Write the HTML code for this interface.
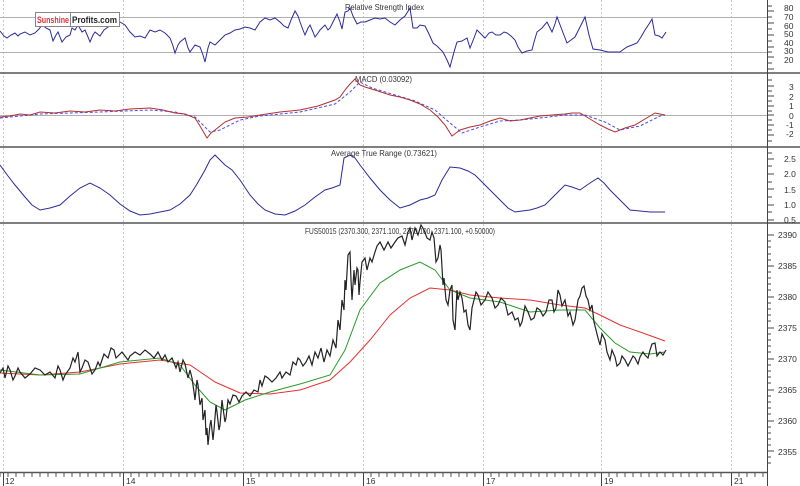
<!DOCTYPE html>
<html><head><meta charset="utf-8"><style>
html,body{margin:0;padding:0;background:#fff;}
svg{display:block;font-family:"Liberation Sans",sans-serif;}
</style></head><body>
<svg width="800" height="486" viewBox="0 0 800 486" xmlns="http://www.w3.org/2000/svg">
<rect width="800" height="486" fill="#fff"/>
<g stroke="#c8c8c8" stroke-dasharray="2,2" stroke-width="1">
<line x1="123.5" y1="0" x2="123.5" y2="472"/><line x1="243.5" y1="0" x2="243.5" y2="472"/>
<line x1="363.5" y1="0" x2="363.5" y2="472"/><line x1="483.5" y1="0" x2="483.5" y2="472"/>
<line x1="601.5" y1="0" x2="601.5" y2="472"/><line x1="731.5" y1="0" x2="731.5" y2="472"/>
<line x1="3.5" y1="0" x2="3.5" y2="472"/>
</g>
<g stroke="#b0b0b0" stroke-width="1">
<line x1="0" y1="17.5" x2="767" y2="17.5"/><line x1="0" y1="52.5" x2="767" y2="52.5"/>
<line x1="0" y1="115.5" x2="767" y2="115.5"/>
</g>
<g stroke="#555" stroke-width="1.5">
<line x1="0" y1="73" x2="800" y2="73"/><line x1="0" y1="147" x2="800" y2="147"/>
<line x1="0" y1="223" x2="800" y2="223"/><line x1="0" y1="472.5" x2="768" y2="472.5"/>
</g>
<line x1="767.5" y1="0" x2="767.5" y2="486" stroke="#444"/>
<g stroke="#444" stroke-width="1">
<path d="M768 6h4M768 11h6M768 17h4M768 23h6M768 29h4M768 35h6M768 41h4M768 47h6M768 52h4M768 57h6M768 63h4M768 69h6"/>
<path d="M768 80h4M768 86h6M768 91h4M768 96h6M768 101h4M768 106h6M768 111h4M768 115h6M768 120h4M768 125h6M768 130h4M768 135h6M768 141h4"/>
<path d="M768 153h4M768 159h6M768 166h4M768 174h6M768 182h4M768 189h6M768 197h4M768 205h6M768 212h4M768 220h6"/>
<path d="M768 235h6M768 241h3M768 247h3M768 254h3M768 260h3M768 266h6M768 272h3M768 278h3M768 284h3M768 290h3M768 297h6M768 303h3M768 309h3M768 315h3M768 321h3M768 328h6M768 334h3M768 340h3M768 346h3M768 352h3M768 359h6M768 365h3M768 371h3M768 377h3M768 383h3M768 390h6M768 396h3M768 402h3M768 408h3M768 414h3M768 421h6M768 427h3M768 433h3M768 439h3M768 445h3M768 451h6M768 457h3M768 463h3"/>
</g>
<g font-size="8.5" fill="#333">
<text x="784" y="11">80</text><text x="784" y="20">70</text><text x="784" y="29">60</text><text x="784" y="37">50</text><text x="784" y="46">40</text><text x="784" y="54">30</text><text x="784" y="63">20</text>
<text x="789" y="90">3</text><text x="789" y="100">2</text><text x="789" y="109">1</text><text x="789" y="119">0</text><text x="786" y="128">-1</text><text x="786" y="137">-2</text>
<text x="784" y="162">2.5</text><text x="784" y="177">2.0</text><text x="784" y="193">1.5</text><text x="784" y="208">1.0</text><text x="784" y="223">0.5</text>
<text x="778" y="238">2390</text><text x="778" y="269">2385</text><text x="778" y="300">2380</text><text x="778" y="331">2375</text><text x="778" y="362">2370</text><text x="778" y="393">2365</text><text x="778" y="424">2360</text><text x="778" y="455">2355</text>
</g>
<path d="M0 473v4M8 473v4M16 473v4M24 473v4M32 473v4M40 473v4M48 473v4M56 473v4M64 473v4M72 473v4M80 473v4M88 473v4M96 473v4M104 473v4M112 473v4M120 473v4M131 473v4M139 473v4M147 473v4M155 473v4M163 473v4M171 473v4M179 473v4M187 473v4M195 473v4M203 473v4M211 473v4M219 473v4M227 473v4M235 473v4M251 473v4M259 473v4M267 473v4M275 473v4M283 473v4M291 473v4M299 473v4M307 473v4M315 473v4M323 473v4M331 473v4M339 473v4M347 473v4M355 473v4M371 473v4M379 473v4M387 473v4M395 473v4M403 473v4M411 473v4M419 473v4M427 473v4M435 473v4M443 473v4M451 473v4M459 473v4M467 473v4M475 473v4M491 473v4M499 473v4M507 473v4M515 473v4M523 473v4M531 473v4M539 473v4M547 473v4M555 473v4M563 473v4M571 473v4M579 473v4M587 473v4M595 473v4M609 473v4M617 473v4M625 473v4M633 473v4M641 473v4M649 473v4M657 473v4M665 473v4M673 473v4M681 473v4M689 473v4M697 473v4M705 473v4M713 473v4M721 473v4M739 473v4M747 473v4M755 473v4M763 473v4" stroke="#555"/>
<path d="M3.5 473v13M123.5 473v13M243.5 473v13M363.5 473v13M483.5 473v13M601.5 473v13M731.5 473v13" stroke="#444"/>
<g font-size="8.5" fill="#333">
<text x="5" y="484">12</text><text x="126" y="484">14</text><text x="246" y="484">15</text><text x="366" y="484">16</text><text x="486" y="484">17</text><text x="604" y="484">19</text><text x="734" y="484">21</text>
</g>
<g font-size="8.5" fill="#333">
<text x="345" y="10" textLength="79" lengthAdjust="spacingAndGlyphs">Relative Strength Index</text>
<text x="355" y="82" textLength="57" lengthAdjust="spacingAndGlyphs">MACD (0.03092)</text>
<text x="331" y="156" textLength="106" lengthAdjust="spacingAndGlyphs">Average True Range (0.73621)</text>
<text x="305" y="234" textLength="190" lengthAdjust="spacingAndGlyphs">FUS50015 (2370.300, 2371.100, 2370.100, 2371.100, +0.50000)</text>
</g>
<polyline fill="none" stroke="#2b2b9a" stroke-width="1" points="0,31 4,36 7,38 11,35 15,33 18,36 20,34 25,32 30,35 35,33 39,29 42,25 46,28 50,30 53,41 56,35 58,32 62,42 66,37 70,35 72,28 75,30 78,25 82,32 85,30 88,37 90,42 93,35 95,32 100,36 104,30 108,27 112,25 115,23 120,22 125,25 130,32 135,37 140,36 145,38 150,30 155,32 160,30 165,33 170,38 173,46 175,53 178,45 180,42 185,38 188,48 190,52 195,45 200,47 203,55 205,62 208,48 210,42 215,45 220,40 225,35 230,33 235,30 240,29 245,27 250,28 255,30 260,22 265,18 270,20 275,18 280,22 284,26 288,28 291,20 295,11 298,16 300,22 303,30 305,35 308,28 310,25 313,32 315,37 318,33 320,30 325,25 328,30 330,28 334,20 337,14 340,22 342,29 345,12 348,11 350,8 353,16 357,24 361,22 365,22 370,20 375,18 380,19 385,18 390,22 395,25 400,20 405,16 410,8 413,28 417,28 420,25 425,26 429,34 433,43 437,46 443,52 447,60 450,67 454,52 457,42 462,41 467,38 470,48 474,38 477,30 481,34 485,38 489,33 492,32 496,35 500,35 504,32 507,33 511,36 515,40 518,47 522,53 527,51 532,50 534,42 537,32 542,28 547,22 550,28 552,32 555,24 557,17 562,30 567,43 571,40 575,37 580,27 585,17 589,35 593,49 600,50 608,52 614,52 620,52 624,49 627,47 632,45 637,43 641,37 645,30 649,24 652,19 655,35 659,36 662,38 666,32"/>
<polyline fill="none" stroke="#4a4af0" stroke-width="1" stroke-dasharray="3,2" points="0,118 40,114 100,112 150,110 175,112 195,117 210,132 220,130 240,120 260,116 300,112 335,104 350,92 360,82 372,88 395,95 415,101 435,110 450,123 462,133 480,127 500,121 520,120 540,118 565,115 585,115 605,122 620,130 640,126 660,116 665,115"/>
<polyline fill="none" stroke="#b03030" stroke-width="1" points="0,117 10,116 20,114 30,115 40,112 55,113 70,111 85,112 100,110 115,111 130,109 150,108 163,110 175,113 185,114 195,118 200,126 207,138 211,133 215,130 225,122 235,118 248,117 260,115 280,112 300,110 318,106 335,100 340,97 345,90 350,84 355,79 360,85 365,87 378,91 390,95 400,97 410,100 420,104 430,110 438,117 445,125 452,136 456,133 460,130 470,127 480,125 490,121 500,118 510,121 520,120 530,118 540,116 552,115 565,114 572,113 580,113 590,119 600,125 608,129 615,132 625,128 635,125 645,119 655,113 660,114 665,115"/>
<polyline fill="none" stroke="#2b2b9a" stroke-width="1" points="0,165 8,176 15,185 25,197 32,205 40,210 50,208 60,205 70,196 80,188 90,183 100,188 110,195 120,204 130,211 140,215 150,214 160,212 170,210 180,204 190,195 197,184 205,170 210,160 215,155 225,165 232,170 240,180 250,195 258,204 265,210 275,214 285,215 295,211 305,205 315,197 325,190 332,188 340,185 344,158 350,155 355,158 360,165 370,178 380,190 390,200 400,208 410,205 420,200 428,198 435,195 442,180 450,167 460,168 468,171 475,175 482,182 490,190 500,200 508,208 515,212 522,211 530,210 537,208 545,205 555,195 565,185 572,187 580,190 590,183 598,178 604,183 610,190 620,200 630,210 640,211 650,212 665,212"/>
<polyline fill="none" stroke="#e83030" stroke-width="1" points="0,373 40,375 80,372 120,364 160,360 190,365 215,382 240,393 270,394 300,390 330,380 350,362 370,340 390,315 410,298 430,288 450,290 470,295 500,298 530,300 560,305 585,308 600,315 620,325 640,332 665,341"/>
<polyline fill="none" stroke="#2a9a2a" stroke-width="1" points="0,370 40,375 80,374 120,362 160,358 180,365 195,385 210,402 225,410 245,400 270,392 300,384 330,375 345,350 360,310 380,283 400,270 420,262 435,270 450,290 470,298 500,302 530,312 560,310 585,310 600,328 615,343 630,352 650,354 665,352"/>
<polyline fill="none" stroke="#222" stroke-width="1.2" points="0,373 3,368 5,378 8,366 10,370 13,380 15,376 18,368 20,372 25,378 30,374 35,368 40,370 45,375 50,372 55,378 58,366 60,370 63,380 65,375 70,368 73,358 75,362 78,352 80,372 82,368 85,360 88,362 92,374 95,370 98,362 100,366 104,354 108,358 111,348 114,350 116,358 118,356 122,352 125,356 128,360 130,356 135,352 140,355 145,350 150,354 154,358 158,352 162,360 165,355 168,362 172,358 176,368 178,362 180,372 183,360 185,364 188,378 190,370 192,378 194,392 195,400 197,380 198,385 200,405 202,398 203,420 205,410 206,435 207,428 208,445 210,425 211,420 213,440 214,430 216,405 217,412 219,430 220,425 222,400 223,408 225,422 226,418 228,400 230,404 233,395 236,396 239,402 242,396 246,392 250,396 254,390 258,392 260,380 262,386 265,376 268,378 272,382 276,378 280,372 282,378 286,372 290,375 293,362 296,365 298,358 300,360 303,366 306,362 309,356 312,365 315,352 318,358 321,348 324,362 327,350 330,356 333,340 336,348 338,320 340,330 342,300 344,310 345,280 346,290 348,255 350,252 351,280 352,300 354,270 355,285 357,268 358,270 359,295 360,282 362,262 365,258 367,270 370,258 372,262 375,252 377,246 380,242 384,250 388,242 391,248 395,242 398,238 402,236 405,245 408,232 410,228 412,240 415,228 418,235 421,225 424,230 427,238 430,240 432,232 434,238 436,262 438,258 440,245 441,250 443,285 444,278 446,300 448,305 450,290 452,285 453,320 455,330 457,290 458,300 460,292 462,298 464,312 466,310 468,325 470,330 472,308 474,300 476,292 478,295 481,305 485,300 488,292 492,298 495,308 498,305 501,298 505,302 508,315 512,312 515,320 518,318 520,326 522,322 525,306 528,312 531,320 534,318 537,308 540,310 543,316 546,312 549,300 552,300 554,312 556,308 558,290 560,295 562,306 565,300 568,316 570,312 573,325 575,320 578,300 580,296 582,288 584,286 586,296 588,300 590,310 592,305 594,322 596,330 598,338 600,345 602,334 605,340 607,352 610,360 612,350 615,357 617,366 620,363 622,356 625,360 628,366 630,362 633,356 635,358 638,364 640,357 643,352 645,355 648,358 650,350 652,344 655,343 657,356 660,352 663,355 666,350"/>
<rect x="35.5" y="12.5" width="84" height="14" fill="#fff" stroke="#888"/>
<line x1="70.5" y1="13" x2="70.5" y2="26" stroke="#888"/>
<text x="37" y="23" font-size="9" font-weight="bold" fill="#e0303a" textLength="32" lengthAdjust="spacingAndGlyphs">Sunshine</text>
<text x="72" y="23" font-size="9" font-weight="bold" fill="#222" textLength="45" lengthAdjust="spacingAndGlyphs">Profits.com</text>
</svg>
</body></html>
